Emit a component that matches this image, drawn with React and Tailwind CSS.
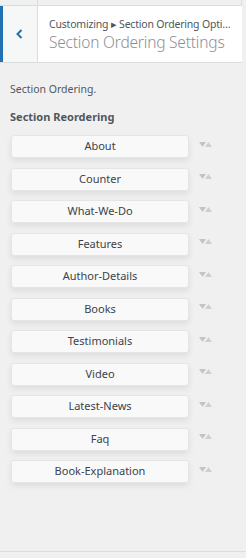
const sections = [
  'About',
  'Counter',
  'What-We-Do',
  'Features',
  'Author-Details',
  'Books',
  'Testimonials',
  'Video',
  'Latest-News',
  'Faq',
  'Book-Explanation',
]

function Arrows() {
  return (
    <svg width="16" height="8" viewBox="0 0 16 8" className="shrink-0">
      <polygon points="0,1 7,1 3.5,6" fill="#c4c4c4" />
      <polygon points="6,6 13,6 9.5,1" fill="#cfcfcf" />
    </svg>
  )
}

export default function App() {
  return (
    <div
      className="w-[246px] h-[558px] bg-[#f0f0f1] flex flex-col overflow-hidden"
      style={{ fontFamily: '"Noto Sans", "Open Sans", sans-serif' }}
    >
      {/* top strip */}
      <div className="h-[5px] flex shrink-0">
        <div className="w-[38px] border-r border-[#dcdcde]" />
        <div className="w-[204px] border-r border-[#dcdcde]" />
      </div>

      {/* header */}
      <div className="h-[58px] flex shrink-0 w-[242px] border-y border-[#dcdcde] bg-white">
        <button className="w-[38px] h-full bg-[#f6f7f7] border-l-[3px] border-[#2271b1] border-r border-r-[#dcdcde] flex items-center justify-center">
          <svg width="10" height="12" viewBox="0 0 10 12">
            <path d="M6.5 2 L2.5 6 L6.5 10" fill="none" stroke="#2271b1" strokeWidth="2" />
          </svg>
        </button>
        <div className="flex-1 min-w-0 pl-[11px] pt-[11px] pr-2">
          <div className="text-[10.5px] leading-[14px] text-[#50575e] truncate tracking-[-0.2px]">
            Customizing ▸ Section Ordering Options
          </div>
          <div className="text-[15.5px] leading-[21px] font-light text-[#8c8f94] truncate mt-[1px] tracking-[-0.2px]">
            Section Ordering Settings
          </div>
        </div>
      </div>

      {/* content */}
      <div className="flex-1 px-[10px] pt-[19px]">
        <p className="text-[10.5px] text-[#50575e] leading-[14px]">Section Ordering.</p>
        <h3 className="text-[11px] font-bold text-[#50575e] mt-[14px] leading-[14px]">Section Reordering</h3>
        <ul className="mt-[11px] flex flex-col gap-[9.5px]">
          {sections.map((name) => (
            <li key={name} className="flex items-center">
              <div className="ml-[1px] w-[178px] h-[23px] bg-[#f9f9f9] border border-[#e5e5e5] rounded-[3px] shadow-[0_3px_6px_rgba(0,0,0,0.08)] flex items-center justify-center text-[11px] text-[#3c434a]">
                {name}
              </div>
              <div className="ml-[10px] -mt-[4px]">
                <Arrows />
              </div>
            </li>
          ))}
        </ul>
      </div>

      {/* footer line */}
      <div className="h-[7px] border-t border-[#dcdcde] bg-[#f0f0f1] shrink-0" />
    </div>
  )
}
